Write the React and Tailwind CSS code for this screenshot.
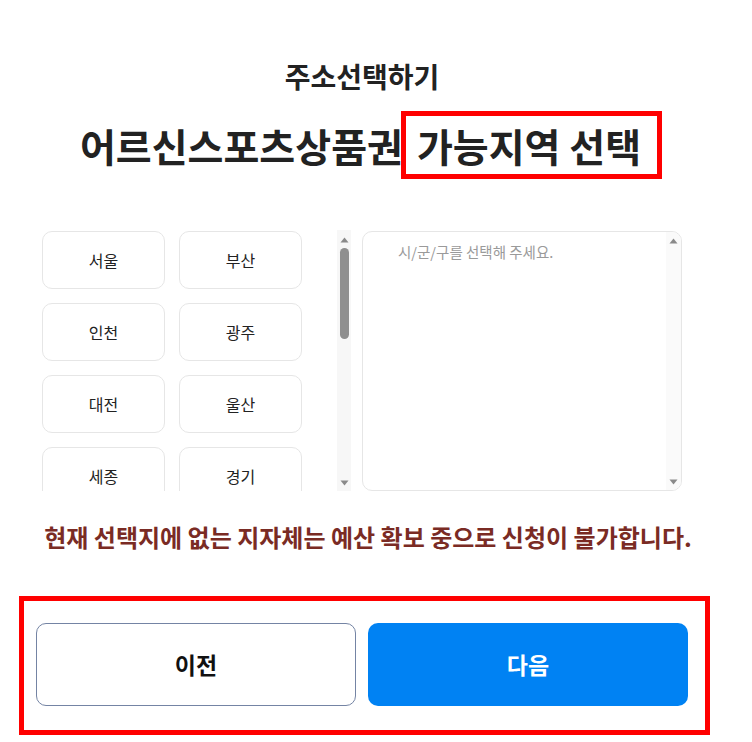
const REGIONS = ["서울", "부산", "인천", "광주", "대전", "울산", "세종", "경기"];

const font = { fontFamily: '"Noto Sans CJK KR", "Noto Sans", sans-serif' };

const UpArrow = () => (
  <svg width="9" height="6" viewBox="0 0 9 6" className="block">
    <path d="M4.5 0.5L8.5 5.5H0.5Z" fill="#8a8a8a" />
  </svg>
);

const DownArrow = () => (
  <svg width="9" height="6" viewBox="0 0 9 6" className="block">
    <path d="M0.5 0.5H8.5L4.5 5.5Z" fill="#8a8a8a" />
  </svg>
);

const App = () => {
  return (
    <div className="w-[752px] h-[742px] bg-white text-[#222] overflow-hidden" style={font}>
      <div className="w-[724px] pt-[58px] flex justify-center">
        <h2 className="text-[28px] leading-[36px] font-bold">주소선택하기</h2>
      </div>
      <div className="w-[742px] mt-[17px] flex justify-center">
        <h1 className="h-[68px] flex items-center text-[39px] font-bold whitespace-nowrap">
          <span className="leading-[58px]">어르신스포츠상품권</span>
          <span className="-ml-[2px] inline-block border-[5px] border-[#ff0000] leading-[58px] pl-[11px] pr-[16px]">
            가능지역 선택
          </span>
        </h1>
      </div>

      <div className="mt-[52px] pl-[42px] flex h-[260px]">
        <div className="w-[260px] h-[260px] overflow-hidden">
          <div className="grid grid-cols-2 gap-[14px]">
            {REGIONS.map((r) => (
              <button
                key={r}
                className="h-[58px] rounded-[10px] border border-[#e6e6e6] bg-white text-[16px] text-[#222]"
              >
                {r}
              </button>
            ))}
          </div>
        </div>
        <div className="ml-[35px] w-[14px] h-[261px] -mt-[1px] bg-[#f7f7f7] flex flex-col items-center">
          <div className="pt-[7px]">
            <UpArrow />
          </div>
          <div className="mt-[5px] w-[9px] h-[91px] rounded-full bg-[#8f8f8f]" />
          <div className="mt-auto pb-[5px]">
            <DownArrow />
          </div>
        </div>
        <div className="ml-[11px] w-[320px] h-[260px] rounded-[10px] border border-[#e6e6e6] flex overflow-hidden">
          <div className="flex-1 pl-[35px] pt-[9px] text-[14.5px] text-[#9a9a9a]">시/군/구를 선택해 주세요.</div>
          <div className="w-[15px] bg-[#fafafa] flex flex-col items-center">
            <div className="pt-[6px]">
              <UpArrow />
            </div>
            <div className="mt-auto pb-[5px]">
              <DownArrow />
            </div>
          </div>
        </div>
      </div>

      <div className="w-[736px] mt-[31px] text-center text-[24px] leading-[30px] font-bold text-[#7a2b24]">
        현재 선택지에 없는 지자체는 예산 확보 중으로 신청이 불가합니다.
      </div>

      <div className="mt-[44px] ml-[19px] w-[691px] h-[139px] border-[5px] border-[#ff0000] pl-[12px] pt-[22px]">
        <div className="flex gap-[12px]">
          <button className="w-[320px] h-[83px] rounded-[10px] border border-[#7484a4] bg-white text-[23px] font-bold text-[#111]">
            이전
          </button>
          <button className="w-[320px] h-[83px] rounded-[10px] bg-[#0082f3] text-[23px] font-bold text-white">
            다음
          </button>
        </div>
      </div>
    </div>
  );
};

export default App;
